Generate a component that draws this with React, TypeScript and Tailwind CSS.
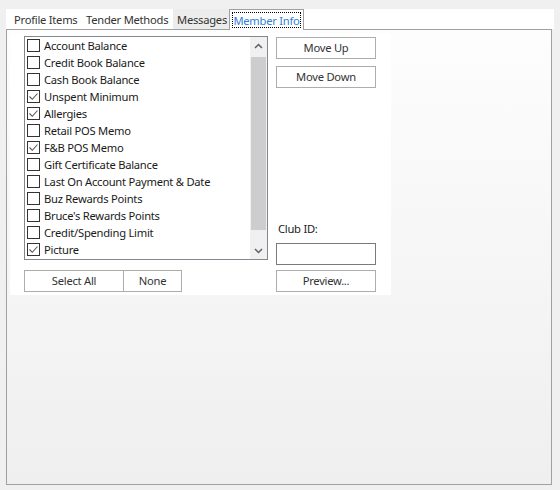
import React from "react";

const items: { label: string; checked: boolean }[] = [
  { label: "Account Balance", checked: false },
  { label: "Credit Book Balance", checked: false },
  { label: "Cash Book Balance", checked: false },
  { label: "Unspent Minimum", checked: true },
  { label: "Allergies", checked: true },
  { label: "Retail POS Memo", checked: false },
  { label: "F&B POS Memo", checked: true },
  { label: "Gift Certificate Balance", checked: false },
  { label: "Last On Account Payment & Date", checked: false },
  { label: "Buz Rewards Points", checked: false },
  { label: "Bruce's Rewards Points", checked: false },
  { label: "Credit/Spending Limit", checked: false },
  { label: "Picture", checked: true },
];

function Check({ checked }: { checked: boolean }) {
  return (
    <span className="w-[13px] h-[13px] border border-[#333333] bg-white flex items-center justify-center shrink-0">
      {checked && (
        <svg width="11" height="11" viewBox="0 0 11 11">
          <path d="M1.5 5.5l2.8 2.8L9.5 2.5" fill="none" stroke="#555555" strokeWidth="1.1" />
        </svg>
      )}
    </span>
  );
}

function Btn({ children, className = "" }: { children: React.ReactNode; className?: string }) {
  return (
    <div className={`h-[22px] border border-[#adadad] bg-white flex items-center justify-center text-[#333333] ${className}`}>
      {children}
    </div>
  );
}

export default function App() {
  return (
    <div
      className="w-[560px] h-[490px] bg-[#f0f0f0] pt-[9px] px-[6px] text-[11.2px] tracking-[-0.25px] leading-none text-[#1a1a1a] whitespace-nowrap"
      style={{ fontFamily: '"Noto Sans", "Open Sans", sans-serif' }}
    >
      {/* Tabs */}
      <div className="h-[20px] bg-white flex">
        <div className="w-[74px] flex items-center pl-[8px] pt-[1px] text-[#333333]">Profile Items</div>
        <div className="w-[93px] flex items-center pl-[6px] pt-[1px] text-[#333333]">Tender Methods</div>
        <div className="w-[56px] flex items-center pl-[4px] pt-[1px] bg-[#ececec] text-[#333333]">Messages</div>
        <div className="w-[75px] h-[21px] border border-b-0 border-[#a0a0a0] bg-white p-[2px] relative z-10">
          <div className="h-full border border-dotted border-black flex items-center justify-center pt-[1px] text-[#2f80dc]">
            Member Info
          </div>
        </div>
      </div>

      {/* Panel */}
      <div className="h-[456px] w-[546px] border border-[#a0a0a0] bg-gradient-to-b from-[#fdfdfd] to-[#efefef] pl-[3px] pt-[3px]">
        <div className="w-[381px] h-[262px] bg-white flex items-start">
          {/* Left column */}
          <div className="ml-[14px] mt-[3px] flex flex-col">
            <div className="w-[244px] h-[224px] border border-[#828790] flex">
              <div className="flex-1 flex flex-col pl-[2px]">
                {items.map((it) => (
                  <div key={it.label} className="h-[17px] flex items-center gap-[4px]">
                    <Check checked={it.checked} />
                    <span className="pt-[1px]">{it.label}</span>
                  </div>
                ))}
              </div>
              <div className="w-[17px] bg-[#f0f0f0] flex flex-col">
                <div className="h-[17px] flex items-center justify-center">
                  <svg width="9" height="6" viewBox="0 0 9 6">
                    <path d="M1 5l3.5-3.5L8 5" fill="none" stroke="#606060" strokeWidth="1.5" />
                  </svg>
                </div>
                <div className="flex-1 px-[1px] pt-[3px] pb-[12px]">
                  <div className="h-full bg-[#cdcdcd]" />
                </div>
                <div className="h-[17px] flex items-center justify-center">
                  <svg width="9" height="6" viewBox="0 0 9 6">
                    <path d="M1 1l3.5 3.5L8 1" fill="none" stroke="#606060" strokeWidth="1.5" />
                  </svg>
                </div>
              </div>
            </div>
            <div className="mt-[10px] flex">
              <Btn className="w-[100px]">Select All</Btn>
              <Btn className="w-[59px] -ml-px">None</Btn>
            </div>
          </div>

          {/* Right column */}
          <div className="ml-[8px] mt-[4px] flex flex-col w-[100px]">
            <Btn>Move Up</Btn>
            <Btn className="mt-[7px]">Move Down</Btn>
            <div className="mt-[134px] h-[14px] pl-[2px] flex items-center">Club ID:</div>
            <div className="mt-[7px] h-[22px] border border-[#7a7a7a] bg-white" />
            <Btn className="mt-[5px]">Preview...</Btn>
          </div>
        </div>
      </div>
    </div>
  );
}
